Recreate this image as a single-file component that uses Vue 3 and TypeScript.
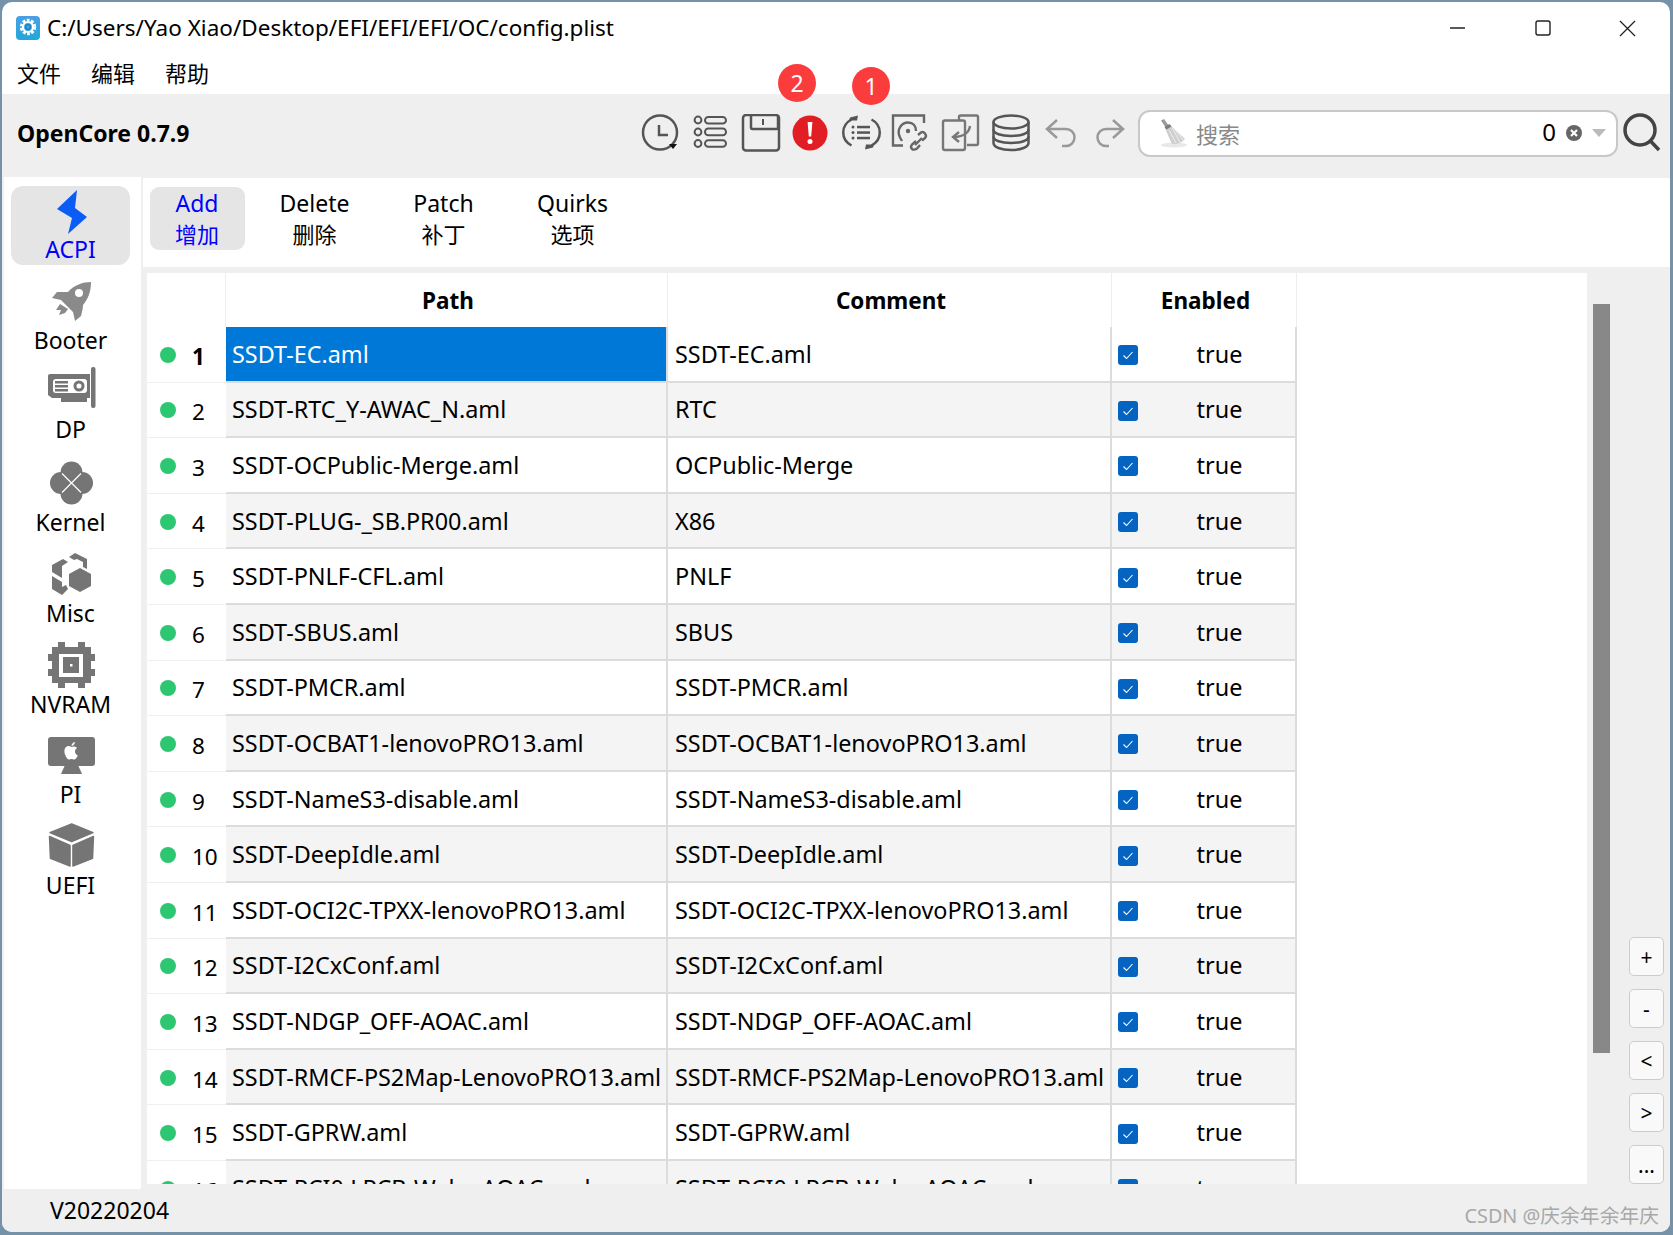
<script setup lang="ts">
interface Row { path: string; comment: string }
const rows: Row[] = [
  { path: 'SSDT-EC.aml', comment: 'SSDT-EC.aml' },
  { path: 'SSDT-RTC_Y-AWAC_N.aml', comment: 'RTC' },
  { path: 'SSDT-OCPublic-Merge.aml', comment: 'OCPublic-Merge' },
  { path: 'SSDT-PLUG-_SB.PR00.aml', comment: 'X86' },
  { path: 'SSDT-PNLF-CFL.aml', comment: 'PNLF' },
  { path: 'SSDT-SBUS.aml', comment: 'SBUS' },
  { path: 'SSDT-PMCR.aml', comment: 'SSDT-PMCR.aml' },
  { path: 'SSDT-OCBAT1-lenovoPRO13.aml', comment: 'SSDT-OCBAT1-lenovoPRO13.aml' },
  { path: 'SSDT-NameS3-disable.aml', comment: 'SSDT-NameS3-disable.aml' },
  { path: 'SSDT-DeepIdle.aml', comment: 'SSDT-DeepIdle.aml' },
  { path: 'SSDT-OCI2C-TPXX-lenovoPRO13.aml', comment: 'SSDT-OCI2C-TPXX-lenovoPRO13.aml' },
  { path: 'SSDT-I2CxConf.aml', comment: 'SSDT-I2CxConf.aml' },
  { path: 'SSDT-NDGP_OFF-AOAC.aml', comment: 'SSDT-NDGP_OFF-AOAC.aml' },
  { path: 'SSDT-RMCF-PS2Map-LenovoPRO13.aml', comment: 'SSDT-RMCF-PS2Map-LenovoPRO13.aml' },
  { path: 'SSDT-GPRW.aml', comment: 'SSDT-GPRW.aml' },
  { path: 'SSDT-PCI0.LPCB-Wake-AOAC.aml', comment: 'SSDT-PCI0.LPCB-Wake-AOAC.aml' }
]
const tabs = [
  { en: 'Add', zh: '增加' },
  { en: 'Delete', zh: '删除' },
  { en: 'Patch', zh: '补丁' },
  { en: 'Quirks', zh: '选项' }
]
const sideButtons = ['+', '-', '<', '>', '...']
</script>

<template>
  <div class="desktop">
    <div class="window">
      <header class="titlebar">
        <svg class="appicon" width="24" height="24" viewBox="0 0 24 24">
          <defs>
            <linearGradient id="ag" x1="0" y1="0" x2="0" y2="1">
              <stop offset="0" stop-color="#4a9fe6" />
              <stop offset="1" stop-color="#1fa8d8" />
            </linearGradient>
          </defs>
          <rect width="24" height="24" rx="4" fill="url(#ag)" />
          <circle cx="12" cy="11" r="6.5" fill="none" stroke="#fff" stroke-width="3.4" stroke-dasharray="2.6 1.5" />
          <circle cx="12" cy="11" r="5" fill="none" stroke="#fff" stroke-width="2.2" />
          <circle cx="12" cy="11" r="2.4" fill="none" stroke="#1f7fc0" stroke-width="1.3" />
        </svg>
        <span class="title">C:/Users/Yao Xiao/Desktop/EFI/EFI/EFI/OC/config.plist</span>
        <div class="winctl">
          <svg width="85" height="20" viewBox="0 0 85 20"><path d="M35 10H50" stroke="#222" stroke-width="1.3" /></svg>
          <svg width="85" height="20" viewBox="0 0 85 20"><rect x="36" y="3" width="14" height="14" rx="2" fill="none" stroke="#222" stroke-width="1.4" /></svg>
          <svg width="85" height="20" viewBox="0 0 85 20"><path d="M35 3L50 18M50 3L35 18" stroke="#222" stroke-width="1.3" /></svg>
        </div>
      </header>
      <nav class="menubar">
        <span>文件</span><span>编辑</span><span>帮助</span>
      </nav>

      <section class="toolbar">
        <strong class="brand">OpenCore 0.7.9</strong>
        <span class="badge badge-two">2</span>
        <span class="badge badge-one">1</span>
        <div class="tools">
          <svg class="tool" viewBox="0 0 50 38">
            <circle cx="25" cy="18.5" r="17" fill="none" stroke="#555" stroke-width="2.5" />
            <path d="M24 11V21H33" fill="none" stroke="#555" stroke-width="2.5" />
            <path d="M34 30H42L38 35Z" fill="#111" />
          </svg>
          <svg class="tool" viewBox="0 0 50 38">
            <g fill="none" stroke="#555" stroke-width="2">
              <circle cx="13" cy="6" r="3.4" /><circle cx="13" cy="18" r="3.4" /><circle cx="13" cy="29.5" r="3.4" />
              <rect x="20" y="3" width="21" height="6.6" rx="3.3" />
              <rect x="20" y="14.6" width="21" height="6.6" rx="3.3" />
              <rect x="20" y="26.2" width="21" height="6.6" rx="3.3" />
            </g>
          </svg>
          <svg class="tool" viewBox="0 0 50 38">
            <rect x="8" y="1" width="36" height="35.5" rx="3" fill="none" stroke="#555" stroke-width="2.5" />
            <path d="M16 1V13.5Q16 15 17.5 15H41.5Q43 15 43 13.5V1" fill="none" stroke="#555" stroke-width="2.5" />
            <path d="M28 5V11" stroke="#555" stroke-width="2" />
          </svg>
          <svg class="tool" viewBox="0 0 50 38">
            <circle cx="25" cy="19" r="17.5" fill="#e01e24" />
            <path d="M22.6 8H27.4L26.2 22.5H23.8Z" fill="#fff" />
            <circle cx="25" cy="27.5" r="2.5" fill="#fff" />
          </svg>
          <svg class="tool" viewBox="0 0 50 38">
            <g fill="none" stroke="#555" stroke-width="2.5">
              <path d="M16.500 5.500A16.500 15 0 0 0 16.500 31.500" />
              <path d="M36.500 5.500A16.500 15 0 0 1 36.500 31.500" />
            </g>
            <path d="M15 3.500L23 1.500L22 6.500H14Z" fill="#555" />
            <path d="M38 33.500L30 35.500L31 30.500H39Z" fill="#555" />
            <g fill="#555">
              <circle cx="18" cy="13" r="1.5" /><circle cx="18" cy="18.5" r="1.5" /><circle cx="18" cy="24" r="1.5" />
              <rect x="22" y="11.8" width="13" height="2.5" /><rect x="22" y="17.3" width="13" height="2.5" /><rect x="22" y="22.8" width="13" height="2.5" />
            </g>
          </svg>
          <svg class="tool" viewBox="0 0 50 38">
            <g fill="none" stroke="#666" stroke-width="2.4">
              <path d="M18 31.500H8V1.500H39V9" />
              <path d="M17 27L15 23.500C11 15 17 8.500 23 8.500C28 8.500 31 12 31 17" />
              <path d="M33 21L36 18.500Q38 17 40 19.500Q42 22 40 24L37 26.500" />
              <path d="M31 27L27 30.500Q25 33 27 35Q29 36.500 32 34.500L35 31" />
              <path d="M30 31L37 24" />
            </g>
            <circle cx="23" cy="17" r="2.2" fill="#666" />
          </svg>
          <svg class="tool" viewBox="0 0 50 38">
            <g fill="none" stroke="#777" stroke-width="2.4">
              <path d="M24 6V3Q24 1.5 25.5 1.5H41.5Q43 1.5 43 3V29.5Q43 31 41.5 31H32" />
              <rect x="8" y="6.5" width="22" height="29.5" rx="2" />
              <path d="M35 12C34 19 28 23 19 23" />
              <path d="M24 18L18 23L24 28" />
            </g>
          </svg>
          <svg class="tool" viewBox="0 0 50 38">
            <g fill="none" stroke="#555" stroke-width="2.5">
              <ellipse cx="26" cy="8" rx="17.5" ry="6.5" />
              <path d="M8.5 8V29C8.5 33 16 36 26 36S43.500 33 43.500 29V8" />
              <path d="M8.500 15.500C8.500 19.500 16 22 26 22S43.500 19.500 43.500 15.500" />
              <path d="M8.500 22.500C8.500 26.500 16 29 26 29S43.500 26.500 43.500 22.500" />
            </g>
          </svg>
          <svg class="tool" viewBox="0 0 50 38">
            <path d="M22 6L12 15L22 24M12 15H31A8.500 8.500 0 0 1 31 32H27" fill="none" stroke="#999" stroke-width="2.500" />
          </svg>
          <svg class="tool" viewBox="0 0 50 38">
            <path d="M28 6L38 15L28 24M38 15H21A8.500 8.500 0 0 0 21 32H24" fill="none" stroke="#999" stroke-width="2.500" />
          </svg>
        </div>
        <div class="search">
          <svg class="broom" width="30" height="30" viewBox="0 0 30 30">
            <ellipse cx="15" cy="27" rx="13" ry="2.500" fill="#e8e8e8" />
            <path d="M2 2.500L5 1L10 8L7 10Z" fill="#9a9a9a" />
            <path d="M6 10L11 7L26 21Q21 27 13 26Q9 18 6 10Z" fill="#cfcfcf" />
            <path d="M10 12L17 25M13 10L21 24M16 12L24 22" stroke="#eee" stroke-width="1" />
            <path d="M5.500 9L10.500 6L12.500 8.500L7.500 11.500Z" fill="#7c7c7c" />
          </svg>
          <span class="placeholder">搜索</span>
          <span class="count">0</span>
          <svg width="18" height="18" viewBox="0 0 18 18">
            <circle cx="9" cy="9" r="8" fill="#666" />
            <path d="M6 6L12 12M12 6L6 12" stroke="#fff" stroke-width="2.200" />
          </svg>
          <svg class="caret" width="14" height="8" viewBox="0 0 14 8"><path d="M0 0H14L7 8Z" fill="#bbb" /></svg>
        </div>
        <svg class="magnifier" width="40" height="40" viewBox="0 0 40 40">
          <circle cx="18" cy="17" r="15" fill="none" stroke="#444" stroke-width="3.500" />
          <path d="M28.500 28L37 37" stroke="#444" stroke-width="3.500" />
        </svg>
      </section>

      <div class="body">
        <aside class="sidebar">
          <div class="sideitem active">
            <svg class="sideicon" viewBox="0 0 48 44"><path d="M30 2L10 21L25 30L21 46L40 29L28 20Z" fill="#0a5cf5" /></svg>
            <span>ACPI</span>
          </div>
          <div class="sideitem">
            <svg class="sideicon" viewBox="0 0 48 44">
              <path d="M44 2C36 2 27 5 21 12L10 12L5 18L14 20L26 32L28 41L34 36C35 32 36 28 36 25C41 19 44 12 44 2Z" fill="#8a8a8a" />
              <circle cx="32" cy="13" r="4" fill="#fff" />
              <path d="M13 24L9 30L14 30L12 35L18 33L21 29Z" fill="#8a8a8a" />
            </svg>
            <span>Booter</span>
          </div>
          <div class="sideitem">
            <svg class="sideicon" viewBox="0 0 48 44">
              <rect x="44" y="0" width="4.500" height="41" rx="2" fill="#757575" />
              <path d="M3 7H43V31H5L1 28V9Q1 7 3 7Z" fill="#757575" />
              <rect x="14" y="31" width="26" height="4" fill="#757575" />
              <rect x="6" y="12" width="34" height="14" rx="3" fill="#fff" />
              <path d="M8 14H21V16.500H8ZM8 18H21V20.500H8ZM8 22H21V24.500H8Z" fill="#757575" />
              <circle cx="32" cy="19" r="4" fill="none" stroke="#757575" stroke-width="3" />
            </svg>
            <span>DP</span>
          </div>
          <div class="sideitem">
            <svg class="sideicon" viewBox="0 0 48 44">
              <g fill="#757575"><circle cx="24.500" cy="11.500" r="11" /><circle cx="24.500" cy="32.500" r="11" /><circle cx="14" cy="22" r="11" /><circle cx="35" cy="22" r="11" /></g>
              <path d="M15 12.500L34 31.500M34 12.500L15 31.500" stroke="#fff" stroke-width="1.200" />
            </svg>
            <span>Kernel</span>
          </div>
          <div class="sideitem">
            <svg class="sideicon" viewBox="0 0 48 44">
              <g fill="#757575">
                <path d="M33 17L44 23V35L33 41L22 35V23Z" />
                <path d="M16 8L21 11L15 15V27L5 21V14Z" />
                <path d="M5 25L15 31V36L19 34L21 38L15 44L5 38Z" />
                <path d="M22 6L28 2L40 8V18L36 16V11L30 8L27 9Z" />
              </g>
            </svg>
            <span>Misc</span>
          </div>
          <div class="sideitem">
            <svg class="sideicon" viewBox="0 0 48 44">
              <path d="M11 0H18V5H31V0H38V5H44V12H48V19H44V27H48V34H44V41H38V46H31V41H18V46H11V41H5V34H1V27H5V19H1V12H5V5H11Z" fill="#757575" />
              <rect x="12" y="12" width="24" height="23" fill="#fff" />
              <rect x="16" y="15" width="16" height="16" fill="#757575" />
              <rect x="23" y="22" width="2.500" height="2.500" fill="#fff" />
            </svg>
            <span>NVRAM</span>
          </div>
          <div class="sideitem">
            <svg class="sideicon" viewBox="0 0 48 44">
              <rect x="1" y="4" width="47" height="29" rx="3" fill="#757575" />
              <path d="M18 32H31L35 41H14Z" fill="#757575" />
              <path d="M24.500 14C22.500 12.800 20.500 12.800 19 14C17 15.800 17 19 18.200 22C19.200 24.400 20.600 26.500 22.200 26.500C23.200 26.500 23.600 25.900 24.600 25.900S26 26.500 27 26.500C28.600 26.500 30 24.300 30.800 22.500C29 21.700 28 20.100 28 18.500C28 17.100 28.800 15.700 30 14.900C28.600 13.300 26.200 12.900 24.500 14Z" fill="#fff" />
              <path d="M24.500 13C24.500 11 25.900 9.400 27.900 9C27.900 11 26.500 12.600 24.500 13Z" fill="#fff" />
            </svg>
            <span>PI</span>
          </div>
          <div class="sideitem">
            <svg class="sideicon" viewBox="0 0 48 46">
              <g fill="#757575" stroke="#757575" stroke-width="1.500" stroke-linejoin="round">
                <path d="M24.700 1L47 10L24.700 19.500L2 10Z" />
                <path d="M1.500 14L23 23.500V45L2.500 37Z" />
                <path d="M47.500 14L26 23.500V45L46.500 37Z" />
              </g>
            </svg>
            <span>UEFI</span>
          </div>
        </aside>

        <main class="main">
          <div class="tabs">
            <button v-for="(tab, i) in tabs" :key="tab.en" class="tab" :class="{ current: i === 0 }">
              <span class="en">{{ tab.en }}</span><span>{{ tab.zh }}</span>
            </button>
          </div>
          <div class="content">
            <div class="table">
              <div class="thead">
                <div class="th c0"></div>
                <div class="th c1">Path</div>
                <div class="th c2">Comment</div>
                <div class="th c3">Enabled</div>
              </div>
              <div v-for="(row, i) in rows" :key="row.path" class="tr" :class="{ shaded: i % 2 === 1 }">
                <div class="num c0" :class="{ bold: i === 0 }">
                  <i class="dot"></i><span>{{ i + 1 }}</span>
                </div>
                <div class="td c1" :class="{ selected: i === 0 }">{{ row.path }}</div>
                <div class="td c2">{{ row.comment }}</div>
                <div class="td c3">
                  <svg class="check" width="20" height="20" viewBox="0 0 20 20">
                    <rect width="20" height="20" rx="3" fill="#0563c1" />
                    <path d="M5.500 10.500L8.500 13.500L14.500 7" fill="none" stroke="#fff" stroke-width="1.100" />
                  </svg>
                  <span class="bool">true</span>
                </div>
              </div>
            </div>
            <div class="scrolltrack"><div class="thumb"></div></div>
            <div class="sidebtns">
              <button v-for="b in sideButtons" :key="b" class="sidebtn">{{ b }}</button>
            </div>
          </div>
        </main>
      </div>

      <footer class="status">
        <span class="version">V20220204</span>
        <span class="mark">CSDN @庆余年余年庆</span>
      </footer>
    </div>
  </div>
</template>

<style>
html, body { margin: 0; padding: 0; }
</style>

<style scoped>
* { box-sizing: border-box; }
.desktop {
  width: 1673px;
  height: 1235px;
  background: #7692a8;
  padding: 2px 3px 3px 2px;
  overflow: hidden;
  font-family: "Noto Sans", "Noto Sans CJK SC", sans-serif;
  font-size: 23.4px;
  color: #000;
}
.window {
  position: relative;
  width: 1668px;
  height: 1230px;
  background: #fff;
  border-radius: 10px;
  overflow: hidden;
  display: flex;
  flex-direction: column;
}
.titlebar {
  height: 48px;
  flex: none;
  display: flex;
  align-items: center;
  padding: 3px 0 0 14px;
}
.appicon { flex: none; }
.title { margin-left: 7px; font-size: 22.5px; }
.winctl { margin-left: auto; display: flex; }
.menubar {
  height: 44px;
  flex: none;
  display: flex;
  align-items: center;
  gap: 30px;
  padding: 0 0 0 15px;
  font-size: 22px;
}
.toolbar {
  height: 83px;
  flex: none;
  background: #efefef;
  display: flex;
  align-items: center;
  padding: 0 8px 5px 15px;
}
.brand { font-size: 23px; font-weight: 700; }
.badge {
  position: absolute;
  width: 38px;
  height: 38px;
  border-radius: 50%;
  background: #fb3c3c;
  color: #fff;
  font-size: 23px;
  display: flex;
  align-items: center;
  justify-content: center;
}
.badge-two { left: 776px; top: 62px; }
.badge-one { left: 850px; top: 65px; }
.tools { margin-left: auto; display: flex; }
.tool { width: 50px; height: 38px; flex: none; }
.search {
  width: 480px;
  height: 47px;
  margin-left: 3px;
  background: #fff;
  border: 2px solid #c8c8c8;
  border-radius: 12px;
  display: flex;
  align-items: center;
  padding-left: 19px;
  padding-right: 10px;
}
.broom { flex: none; }
.placeholder { margin-left: 7px; color: #888; font-size: 22px; }
.count { margin-left: auto; margin-right: 9px; font-size: 24px; margin-top: -3px; }
.caret { margin-left: 9px; }
.magnifier { margin-left: 4px; flex: none; }
.body {
  height: 1012px;
  flex: none;
  display: flex;
  background: #efefef;
  padding-left: 2px;
}
.sidebar {
  width: 137px;
  flex: none;
  background: #fff;
  padding-top: 9px;
  padding-left: 7px;
}
.sideitem {
  width: 119px;
  height: 79px;
  padding-top: 2px;
  display: flex;
  flex-direction: column;
  align-items: center;
  font-size: 23px;
  border-radius: 12px;
}
.sideitem span { line-height: 36px; }
.sideitem:nth-child(2) { margin-top: 13px; }
.sideitem:nth-child(2) span { margin-top: -2px; }
.sideitem:nth-child(3) { margin-top: 8px; }
.sideitem:nth-child(4) { margin-top: 15px; }
.sideitem:nth-child(4) span { margin-top: -1px; }
.sideitem:nth-child(5) { margin-top: 11px; }
.sideitem:nth-child(6) { margin-top: 12px; }
.sideitem:nth-child(7) { margin-top: 12px; }
.sideitem:nth-child(7) span { margin-top: -1px; }
.sideitem:nth-child(8) { margin-top: 11px; }
.sideitem.active { background: #e5e5e5; color: #0000ff; }
.sideitem.active span { margin-top: -1px; }
.sideicon { width: 48px; height: 44px; flex: none; overflow: visible; }
.main {
  width: 1527px;
  flex: none;
  margin-left: 2px;
  padding-bottom: 5px;
  display: flex;
  flex-direction: column;
}
.tabs {
  height: 89px;
  flex: none;
  margin-top: 1px;
  background: #fff;
  display: flex;
  gap: 11px;
  padding: 9px 0 0 7px;
}
.tab {
  width: 118px;
  height: 63px;
  border: 0;
  background: transparent;
  border-radius: 9px;
  padding: 0 1px 0 0;
  display: flex;
  flex-direction: column;
  align-items: center;
  justify-content: center;
  font: inherit;
  font-size: 22px;
  line-height: 31px;
  color: #000;
}
.tab .en { font-size: 23px; }
.tab.current { width: 95px; background: #e5e5e5; color: #0000ff; }
.content {
  flex: 1;
  min-height: 0;
  margin-top: 6px;
  display: flex;
  padding-left: 4px;
}
.table {
  width: 1440px;
  flex: none;
  background: #fff;
  overflow: hidden;
}
.thead { display: flex; height: 54px; }
.th {
  border-right: 1px solid #eeeeee;
  display: flex;
  align-items: center;
  justify-content: center;
  padding-left: 3px;
  font-weight: 700;
  font-size: 22.5px;
}
.c0 { width: 79px; flex: none; }
.c1 { width: 442px; flex: none; }
.c2 { width: 444px; flex: none; }
.c3 { width: 185px; flex: none; }
.tr { display: flex; height: 55.6px; }
.num {
  display: flex;
  align-items: center;
  padding-left: 13px;
  gap: 16px;
  border-bottom: 1px solid #efefef;
  font-size: 22.5px;
}
.num span { padding-top: 4px; }
.num.bold { font-weight: 700; }
.dot {
  width: 16px;
  height: 16px;
  border-radius: 50%;
  background: #2ec771;
  flex: none;
  margin-top: 1px;
}
.td {
  display: flex;
  align-items: center;
  padding-left: 6px;
  border-right: 2px solid #dcdcdc;
  border-bottom: 2px solid #dcdcdc;
  white-space: nowrap;
  overflow: hidden;
}
.td.c2 { padding-left: 7px; }
.shaded .td { background: #f4f4f4; }
.td.selected { background: #0078d7; color: #fff; }
.check { flex: none; margin-top: 3px; }
.bool { width: 145px; text-align: center; margin-left: 9px; }
.scrolltrack { width: 17px; flex: none; margin-left: 6px; }
.thumb { margin-top: 31px; height: 749px; background: #888888; }
.sidebtns {
  margin-left: 19px;
  display: flex;
  flex-direction: column;
  justify-content: flex-end;
  gap: 13px;
}
.sidebtn {
  width: 35px;
  height: 39px;
  padding: 0;
  background: #f9f9f9;
  border: 1px solid #cccccc;
  border-radius: 5px;
  font-family: inherit;
  font-size: 21px;
  color: #000;
}
.status {
  flex: 1;
  display: flex;
  align-items: center;
  justify-content: space-between;
  background: #efefef;
  padding: 0 11px 0 48px;
  font-size: 23px;
}
.version { margin-top: -2px; }
.mark { color: #a8a8a8; font-size: 19.8px; margin-top: 8px; }
</style>
